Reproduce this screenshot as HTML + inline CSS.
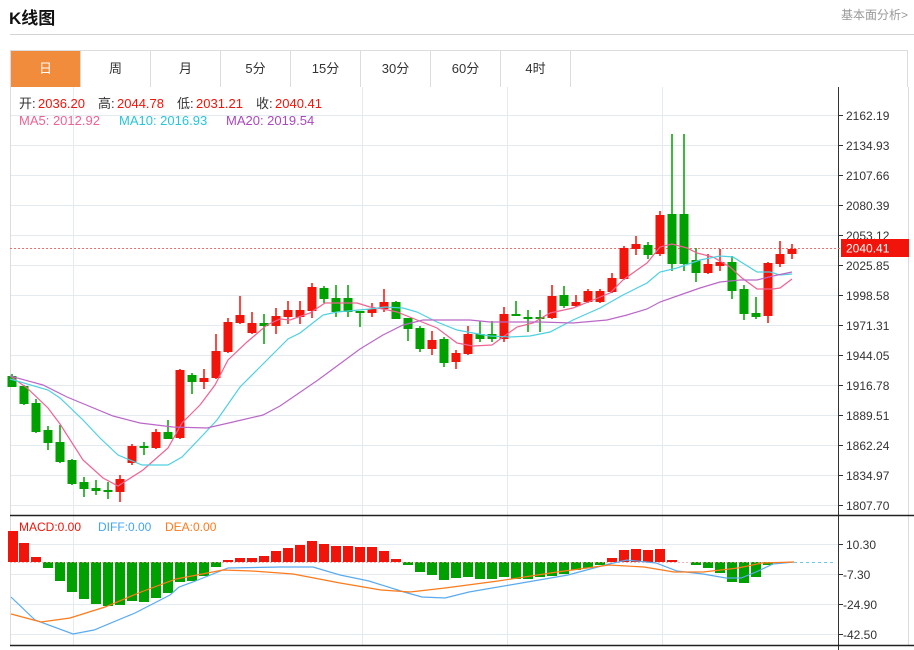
<!DOCTYPE html>
<html><head><meta charset="utf-8"><style>
*{margin:0;padding:0;box-sizing:border-box}
body{width:914px;height:650px;background:#fff;font-family:"Liberation Sans","Noto Sans CJK SC",sans-serif;position:relative;overflow:hidden}
.t{position:absolute;left:9px;top:4px;font-size:17px;font-weight:bold;color:#111}
.r{position:absolute;right:6px;top:6px;font-size:12px;color:#999}
.hl{position:absolute;left:10px;right:0;top:34px;height:1px;background:#d4d4d4}
.tabs{position:absolute;left:10px;top:50px;width:898px;height:37px;border:1px solid #dcdcdc;border-bottom:none}
.tab{position:absolute;top:0;width:70px;height:36px;border-right:1px solid #dcdcdc;text-align:center;line-height:36px;font-size:13px;color:#333}
.tab.a{background:#f08c3c;color:#fff}
svg{position:absolute;left:0;top:0}
</style></head><body>
<div class="t">K线图</div>
<div class="r">基本面分析&gt;</div>
<div class="hl"></div>
<div class="tabs">
<div class="tab a" style="left:0">日</div>
<div class="tab" style="left:70px">周</div>
<div class="tab" style="left:140px">月</div>
<div class="tab" style="left:210px">5分</div>
<div class="tab" style="left:280px">15分</div>
<div class="tab" style="left:350px">30分</div>
<div class="tab" style="left:420px">60分</div>
<div class="tab" style="left:490px">4时</div>
</div>
<svg width="914" height="650" font-family="Liberation Sans, Noto Sans CJK SC, sans-serif">
<g stroke="#e3eaf0" stroke-width="1">
<path d="M10 115.5H838M10 145.5H838M10 175.5H838M10 205.5H838M10 235.5H838M10 265.5H838M10 295.5H838M10 325.5H838M10 355.5H838M10 385.5H838M10 415.5H838M10 445.5H838M10 475.5H838M10 505.5H838"/>
<path d="M10 544.5H838M10 574.5H838M10 604.5H838M10 634.5H838"/>
<path d="M73.5 87V645M362.5 87V645M507.5 87V645M662.5 87V645"/>
</g>
<path d="M10.5 87V645M908.5 87V645" stroke="#dcdcdc"/>
<path d="M838.5 87V650" stroke="#333"/>
<path d="M10 515.5H914M10 645.5H914" stroke="#222" stroke-width="1.5"/>
<g stroke="#333"><path d="M838 115.5h5M838 145.5h5M838 175.5h5M838 205.5h5M838 235.5h5M838 265.5h5M838 295.5h5M838 325.5h5M838 355.5h5M838 385.5h5M838 415.5h5M838 445.5h5M838 475.5h5M838 505.5h5M838 544.5h5M838 574.5h5M838 604.5h5M838 634.5h5"/></g>
<g font-size="12" fill="#333">
<text x="846" y="120">2162.19</text><text x="846" y="150">2134.93</text><text x="846" y="180">2107.66</text><text x="846" y="210">2080.39</text><text x="846" y="240">2053.12</text><text x="846" y="270">2025.85</text><text x="846" y="300">1998.58</text><text x="846" y="330">1971.31</text><text x="846" y="360">1944.05</text><text x="846" y="390">1916.78</text><text x="846" y="420">1889.51</text><text x="846" y="450">1862.24</text><text x="846" y="480">1834.97</text><text x="846" y="510">1807.70</text>
<text x="846" y="549">10.30</text><text x="843" y="579">-7.30</text><text x="843" y="609">-24.90</text><text x="843" y="639">-42.50</text>
</g>
<path d="M10 248.5H840" stroke="#f07070" stroke-dasharray="2,2"/>
<rect x="841" y="239" width="68" height="18" fill="#f0140a"/>
<text x="846" y="252.5" font-size="12" fill="#fff">2040.41</text>
<g font-size="13">
<text x="19" y="108" fill="#333">开:</text><text x="38" y="108" fill="#f0140a">2036.20</text>
<text x="98" y="108" fill="#333">高:</text><text x="117" y="108" fill="#f0140a">2044.78</text>
<text x="177" y="108" fill="#333">低:</text><text x="196" y="108" fill="#f0140a">2031.21</text>
<text x="256" y="108" fill="#333">收:</text><text x="275" y="108" fill="#f0140a">2040.41</text>
<text x="19" y="125" fill="#f06292">MA5: 2012.92</text>
<text x="119" y="125" fill="#26c6da">MA10: 2016.93</text>
<text x="226" y="125" fill="#ab47bc">MA20: 2019.54</text>
</g>
<g font-size="12">
<text x="19" y="531" fill="#f0140a">MACD:0.00</text>
<text x="98" y="531" fill="#42a5f5">DIFF:0.00</text>
<text x="165" y="531" fill="#ff7a1a">DEA:0.00</text>
</g>
<!-- wicks -->
<path stroke="#00a000" stroke-width="1.5" d="M12 374V387M24 385V405M36 399V433M48 426V450M60 425V463M72 459V485M84 477V497M96 480V495M108 482V499M144 442V455M168 420V439M192 373V394M264 314V344M324 286V303M336 285V317M348 285V317M360 311V327M396 301V319M408 318V341M420 326V352M444 337V367M480 321V342M492 321V342M516 301V315M528 310V332M540 310V332M564 286V308M648 242V259M672 134V271M684 134V271M696 248V282M732 256V299M744 285V320M756 297V319"/>
<path stroke="#f0140a" stroke-width="1.5" d="M120 475V502M132 444V465M156 429V449M180 369V439M204 369V389M216 334V379M228 318V353M240 296V324M252 312V334M276 308V334M288 301V324M300 301V324M312 283V318M372 303V317M384 289V312M432 331V355M456 350V369M468 326V355M504 307V342M552 285V319M576 295V307M588 289V303M600 289V303M612 273V293M624 246V280M636 236V255M660 211V256M708 254V274M720 249V271M768 262V323M780 241V267M792 244V259"/>
<g fill="#00a000">
<rect x="7.5" y="376" width="9" height="11"/><rect x="19.5" y="386" width="9" height="18"/><rect x="31.5" y="403" width="9" height="29"/><rect x="43.5" y="430" width="9" height="13"/><rect x="55.5" y="442" width="9" height="20"/><rect x="67.5" y="460" width="9" height="24"/><rect x="79.5" y="482" width="9" height="7"/><rect x="91.5" y="488" width="9" height="3"/><rect x="103.5" y="490" width="9" height="2"/><rect x="139.5" y="446" width="9" height="2"/><rect x="163.5" y="432" width="9" height="7"/><rect x="187.5" y="375" width="9" height="7"/><rect x="259.5" y="323" width="9" height="3"/><rect x="319.5" y="288" width="9" height="11"/><rect x="331.5" y="298" width="9" height="14"/><rect x="343.5" y="298" width="9" height="14"/><rect x="355.5" y="311" width="9" height="2"/><rect x="391.5" y="302" width="9" height="17"/><rect x="403.5" y="318" width="9" height="11"/><rect x="415.5" y="328" width="9" height="21"/><rect x="439.5" y="339" width="9" height="24"/><rect x="475.5" y="334" width="9" height="5"/><rect x="487.5" y="334" width="9" height="5"/><rect x="511.5" y="314" width="9" height="2"/><rect x="523.5" y="317" width="9" height="2"/><rect x="535.5" y="317" width="9" height="2"/><rect x="559.5" y="295" width="9" height="11"/><rect x="643.5" y="245" width="9" height="10"/><rect x="667.5" y="214" width="9" height="50"/><rect x="679.5" y="214" width="9" height="50"/><rect x="691.5" y="260" width="9" height="13"/><rect x="727.5" y="262" width="9" height="29"/><rect x="739.5" y="289" width="9" height="25"/><rect x="751.5" y="313" width="9" height="4"/>
</g>
<g fill="#f0140a">
<rect x="115.5" y="479" width="9" height="13"/><rect x="127.5" y="446" width="9" height="17"/><rect x="151.5" y="432" width="9" height="16"/><rect x="175.5" y="370" width="9" height="68"/><rect x="199.5" y="378" width="9" height="4"/><rect x="211.5" y="351" width="9" height="27"/><rect x="223.5" y="322" width="9" height="30"/><rect x="235.5" y="315" width="9" height="8"/><rect x="247.5" y="323" width="9" height="10"/><rect x="271.5" y="316" width="9" height="10"/><rect x="283.5" y="310" width="9" height="7"/><rect x="295.5" y="310" width="9" height="7"/><rect x="307.5" y="287" width="9" height="24"/><rect x="367.5" y="309" width="9" height="4"/><rect x="379.5" y="302" width="9" height="7"/><rect x="427.5" y="340" width="9" height="9"/><rect x="451.5" y="353" width="9" height="9"/><rect x="463.5" y="334" width="9" height="20"/><rect x="499.5" y="314" width="9" height="25"/><rect x="547.5" y="296" width="9" height="22"/><rect x="571.5" y="302" width="9" height="4"/><rect x="583.5" y="291" width="9" height="11"/><rect x="595.5" y="291" width="9" height="11"/><rect x="607.5" y="278" width="9" height="14"/><rect x="619.5" y="248" width="9" height="31"/><rect x="631.5" y="244" width="9" height="5"/><rect x="655.5" y="215" width="9" height="39"/><rect x="703.5" y="264" width="9" height="9"/><rect x="715.5" y="262" width="9" height="4"/><rect x="763.5" y="263" width="9" height="53"/><rect x="775.5" y="254" width="9" height="10"/><rect x="787.5" y="249" width="9" height="5"/>
</g>
<g fill="none" stroke-width="1.2">
<polyline stroke="#f06292" points="10,376 27,388 48,408 60,424 83,460 103,478 118,486 143,470 168,448 182,423 200,405 215,385 228,360 247,342 267,325 280,319 290,320 310,313 325,303 357,303 370,307 383,309 397,312 417,320 437,328 457,343 473,346 492,345 503,337 517,327 533,323 550,313 573,308 593,300 610,293 623,280 637,270 647,263 660,247 672,244 687,248 697,253 713,257 730,267 742,278 757,289 773,289 780,288 792,279"/>
<polyline stroke="#4dd0e1" points="10,379 48,390 60,398 83,420 100,438 118,455 142,465 168,465 182,457 203,435 217,420 240,387 257,370 280,347 288,339 300,333 323,315 337,312 370,309 385,307 403,308 417,312 437,322 457,330 473,333 490,336 510,337 530,336 550,332 573,320 600,308 623,295 647,283 660,272 677,268 700,260 720,256 733,257 757,272 770,272 780,275 792,274"/>
<polyline stroke="#ba68c8" points="10,376 43,385 67,397 113,416 140,423 173,427 207,428 233,422 263,415 280,406 318,380 360,349 383,335 403,325 423,320 470,320 490,322 540,322 573,323 607,320 627,315 647,309 660,302 680,295 700,288 720,282 740,280 757,280 773,276 792,272"/>
</g>
<!-- MACD bars -->
<g fill="#f0140a">
<rect x="8" y="531" width="10" height="31"/><rect x="19" y="543" width="10" height="19"/><rect x="31" y="557" width="10" height="5"/>
<rect x="223" y="560" width="10" height="2"/><rect x="235" y="558" width="10" height="4"/><rect x="247" y="558" width="10" height="4"/><rect x="259" y="556" width="10" height="6"/><rect x="271" y="551" width="10" height="11"/><rect x="283" y="548" width="10" height="14"/><rect x="295" y="545" width="10" height="17"/><rect x="307" y="541" width="10" height="21"/><rect x="319" y="544" width="10" height="18"/><rect x="331" y="546" width="10" height="16"/><rect x="343" y="546" width="10" height="16"/><rect x="355" y="547" width="10" height="15"/><rect x="367" y="547" width="10" height="15"/><rect x="379" y="551" width="10" height="11"/><rect x="391" y="559" width="10" height="3"/>
<rect x="607" y="558" width="10" height="4"/><rect x="619" y="550" width="10" height="12"/><rect x="631" y="549" width="10" height="13"/><rect x="643" y="550" width="10" height="12"/><rect x="655" y="549" width="10" height="13"/><rect x="667" y="560" width="10" height="2"/>
</g>
<g fill="#00a000">
<rect x="43" y="562" width="10" height="6"/><rect x="55" y="562" width="10" height="19"/><rect x="67" y="562" width="10" height="30"/><rect x="79" y="562" width="10" height="37"/><rect x="91" y="562" width="10" height="42"/><rect x="103" y="562" width="10" height="44"/><rect x="115" y="562" width="10" height="43"/><rect x="127" y="562" width="10" height="39"/><rect x="139" y="562" width="10" height="40"/><rect x="151" y="562" width="10" height="36"/><rect x="163" y="562" width="10" height="31"/><rect x="175" y="562" width="10" height="20"/><rect x="187" y="562" width="10" height="19"/><rect x="199" y="562" width="10" height="14"/><rect x="211" y="562" width="10" height="5"/>
<rect x="403" y="562" width="10" height="3"/><rect x="415" y="562" width="10" height="10"/><rect x="427" y="562" width="10" height="13"/><rect x="439" y="562" width="10" height="18"/><rect x="451" y="562" width="10" height="16"/><rect x="463" y="562" width="10" height="15"/><rect x="475" y="562" width="10" height="17"/><rect x="487" y="562" width="10" height="17"/><rect x="499" y="562" width="10" height="15"/><rect x="511" y="562" width="10" height="17"/><rect x="523" y="562" width="10" height="17"/><rect x="535" y="562" width="10" height="15"/><rect x="547" y="562" width="10" height="14"/><rect x="559" y="562" width="10" height="12"/><rect x="571" y="562" width="10" height="8"/><rect x="583" y="562" width="10" height="6"/><rect x="595" y="562" width="10" height="3"/>
<rect x="691" y="562" width="10" height="3"/><rect x="703" y="562" width="10" height="6"/><rect x="715" y="562" width="10" height="11"/><rect x="727" y="562" width="10" height="20"/><rect x="739" y="562" width="10" height="21"/><rect x="751" y="562" width="10" height="15"/><rect x="763" y="562" width="10" height="3"/>
</g>
<path d="M10 562.5H794" stroke="#f0a0a0" stroke-dasharray="2,2" stroke-width="0.8"/>
<path d="M794 562.5H836" stroke="#6cc8e8" stroke-dasharray="3,3"/>
<g fill="none" stroke-width="1.2">
<polyline stroke="#5aaaf0" points="11,597 35,620 73,634 94,630 135,613 170,595 179,587 193,582 228,568 281,567 313,567 340,575 369,581 404,592 422,597 445,598 469,592 510,585 539,580 568,575 609,564 627,560 656,563 677,571 703,574 726,578 741,578 756,572 773,564 794,562"/>
<polyline stroke="#ff7a1a" points="11,614 41,622 70,618 105,607 141,592 176,579 223,570 252,571 293,574 340,583 381,590 410,592 445,588 498,581 557,572 609,565 644,567 674,572 703,572 738,568 762,563 794,562"/>
</g>
</svg>
</body></html>
